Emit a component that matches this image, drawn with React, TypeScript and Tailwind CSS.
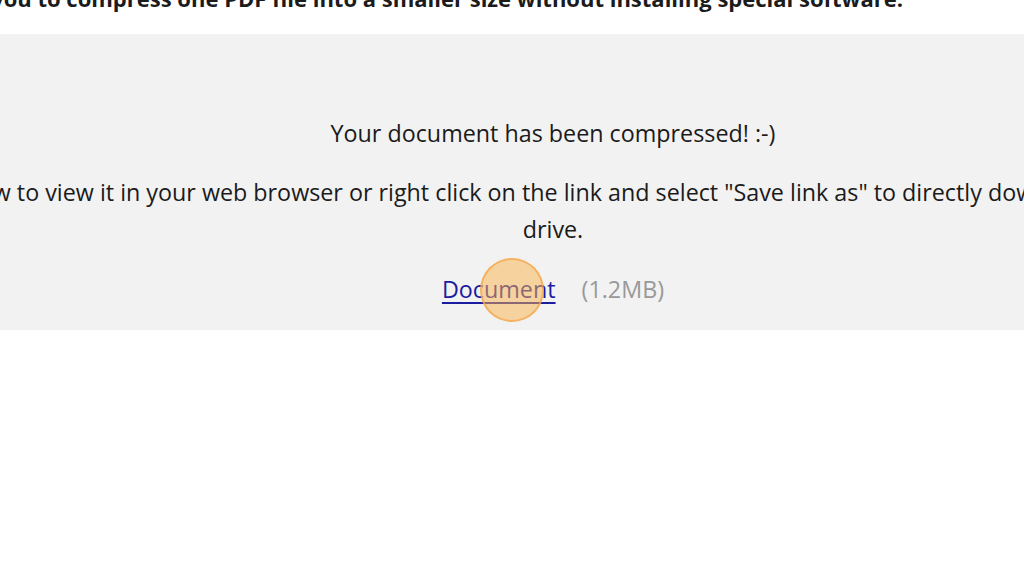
const App = () => {
    return (
        <div className="w-[1024px] h-[576px] overflow-hidden bg-white font-['Open_Sans',sans-serif] text-[#1b1b1b]">
            <div className="flex justify-end pr-[121px] h-[34px] overflow-hidden">
                <h1 className="whitespace-nowrap text-[22px] font-bold leading-none -mt-[13px]">
                    This tool allows you to compress one PDF file into a smaller size without installing special software.
                </h1>
            </div>
            <div className="bg-[#f2f2f2] h-[296px] pl-[82px] flex flex-col items-center pt-[81px]">
                <p className="whitespace-nowrap text-[23.3px] leading-[37px]">Your document has been compressed! :-)</p>
                <p className="whitespace-nowrap text-[23.3px] leading-[37px] mt-[22px] mr-[80px]">
                    Click on the link below to view it in your web browser or right click on the link and select "Save link as" to directly download it to your hard
                </p>
                <p className="whitespace-nowrap text-[23.3px] leading-[37px]">drive.</p>
                <div className="flex items-center gap-[26px] mt-[23px] text-[23.3px] leading-[37px]">
                    <span className="relative">
                        <a href="#" className="text-[#1c1ca0] underline decoration-2 underline-offset-4">Document</a>
                        <span className="absolute left-[38px] top-[-13px] w-[64px] h-[64px] rounded-full bg-[#f9b24a]/50 border-2 border-[#f3a54a]/70" />
                    </span>
                    <span className="text-[#999999]">(1.2MB)</span>
                </div>
            </div>
        </div>
    );
};

export default App;
